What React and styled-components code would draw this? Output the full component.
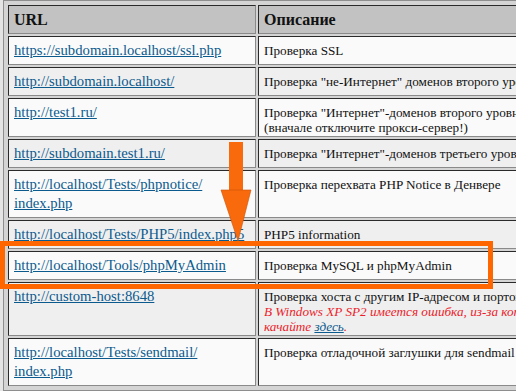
import React from 'react';
import styled, { createGlobalStyle } from 'styled-components';

const serif = '"Liberation Serif", "Times New Roman", serif';

const GlobalStyle = createGlobalStyle`
  html, body {
    margin: 0;
    padding: 0;
    background: #e4e4e4;
    overflow: hidden;
    font-family: ${serif};
  }
`;

const Page = styled.div`
  position: relative;
  width: 516px;
  height: 391px;
  overflow: hidden;
  font-family: ${serif};
`;

const Table = styled.table`
  margin: 0 0 0 3px;
  width: 760px;
  table-layout: fixed;
  border-collapse: separate;
  border-spacing: 2px;
  padding: 2px;
  border: 1px solid #8e8e8e;
  background: #d4d4d4;
  font-family: ${serif};
`;

const HeadCell = styled.th`
  width: ${(p) => (p.$first ? '236px' : 'auto')};
  padding: 4px 5px;
  border: 1px solid;
  border-color: #2a2a2a #8a8a8a #8a8a8a #2a2a2a;
  background: #c2c2c2;
  color: #111;
  font-family: ${serif};
  font-size: 16px;
  line-height: 19px;
  font-weight: bold;
  text-align: left;
`;

const Cell = styled.td`
  padding: 4px 5px ${(p) => (p.$desc ? '1px' : '4px')};
  border: 1px solid;
  border-color: #2a2a2a #8a8a8a #8a8a8a #2a2a2a;
  background: ${(p) => (p.$shaded ? '#efefef' : '#fafafa')};
  vertical-align: baseline;
  color: #111;
  font-family: ${serif};
`;

const UrlLink = styled.a`
  font-family: ${serif};
  font-size: 14.7px;
  line-height: 19px;
  color: #0b5a8e;
  text-decoration: underline;
`;

const Desc = styled.div`
  font-family: ${serif};
  font-size: 13.2px;
  line-height: 15px;
  white-space: nowrap;
`;

const Warning = styled.span`
  color: #ec1c2a;
  font-style: italic;

  a {
    color: #0b5a8e;
  }
`;

const Highlight = styled.div`
  position: absolute;
  left: 0;
  top: 241px;
  width: 483px;
  height: 38px;
  border: 5px solid #ff6600;
  pointer-events: none;
`;

const Arrow = styled.svg`
  position: absolute;
  left: 218px;
  top: 140px;
  pointer-events: none;
`;

const rows = [
  { url: 'https://subdomain.localhost/ssl.php', desc: 'Проверка SSL' },
  { url: 'http://subdomain.localhost/', desc: 'Проверка "не-Интернет" доменов второго уровня' },
  {
    url: 'http://test1.ru/',
    desc: ['Проверка "Интернет"-доменов второго уровня', '(вначале отключите прокси-сервер!)'],
  },
  { url: 'http://subdomain.test1.ru/', desc: 'Проверка "Интернет"-доменов третьего уровня' },
  { url: ['http://localhost/Tests/phpnotice/', 'index.php'], desc: 'Проверка перехвата PHP Notice в Денвере' },
  { url: 'http://localhost/Tests/PHP5/index.php5', desc: 'PHP5 information' },
  { url: 'http://localhost/Tools/phpMyAdmin', desc: 'Проверка MySQL и phpMyAdmin' },
  { url: 'http://custom-host:8648', desc: 'custom' },
  { url: ['http://localhost/Tests/sendmail/', 'index.php'], desc: 'Проверка отладочной заглушки для sendmail' },
];

const renderLines = (value) =>
  Array.isArray(value)
    ? value.map((line, i) => (
        <React.Fragment key={i}>
          {i > 0 && <br />}
          {line}
        </React.Fragment>
      ))
    : value;

const CustomHostDesc = () => (
  <Desc>
    Проверка хоста с другим IP-адресом и портом (127.0.0.2:8648).
    <br />
    <Warning>
      В Windows XP SP2 имеется ошибка, из-за которой тест не проходит. Исправление
      <br />
      качайте <a href="#">здесь</a>.
    </Warning>
  </Desc>
);

const App = () => (
  <Page>
    <GlobalStyle />
    <Table>
      <thead>
        <tr>
          <HeadCell $first>URL</HeadCell>
          <HeadCell>Описание</HeadCell>
        </tr>
      </thead>
      <tbody>
        {rows.map((row, index) => (
          <tr key={index}>
            <Cell $shaded={index % 2 === 1}>
              <UrlLink href="#">{renderLines(row.url)}</UrlLink>
            </Cell>
            <Cell $shaded={index % 2 === 1} $desc>
              {row.desc === 'custom' ? <CustomHostDesc /> : <Desc>{renderLines(row.desc)}</Desc>}
            </Cell>
          </tr>
        ))}
      </tbody>
    </Table>
    <Highlight />
    <Arrow width="36" height="104" viewBox="0 0 36 104">
      <rect x="11" y="2" width="14" height="50" fill="#f96a0c" />
      <polygon points="3,50 33,50 20,101" fill="#f96a0c" stroke="#c85208" strokeWidth="0.6" />
    </Arrow>
  </Page>
);

export default App;
